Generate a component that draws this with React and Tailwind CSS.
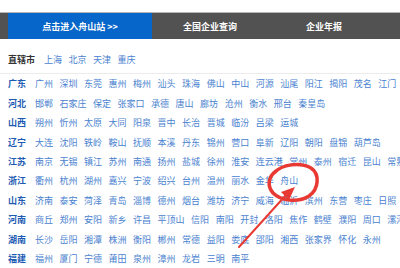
import React from "react";

const rows = [
  ["广东", ["广州","深圳","东莞","惠州","梅州","汕头","珠海","佛山","中山","河源","汕尾","阳江","揭阳","茂名","江门"]],
  ["河北", ["邯郸","石家庄","保定","张家口","承德","唐山","廊坊","沧州","衡水","邢台","秦皇岛"]],
  ["山西", ["朔州","忻州","太原","大同","阳泉","晋中","长治","晋城","临汾","吕梁","运城"]],
  ["辽宁", ["大连","沈阳","铁岭","鞍山","抚顺","本溪","丹东","锦州","营口","阜新","辽阳","朝阳","盘锦","葫芦岛"]],
  ["江苏", ["南京","无锡","镇江","苏州","南通","扬州","盐城","徐州","淮安","连云港","常州","泰州","宿迁","昆山","常熟"]],
  ["浙江", ["衢州","杭州","湖州","嘉兴","宁波","绍兴","台州","温州","丽水","金华","舟山"]],
  ["山东", ["济南","泰安","菏泽","青岛","淄博","德州","烟台","潍坊","济宁","威海","临沂","滨州","东营","枣庄","日照"]],
  ["河南", ["商丘","郑州","安阳","新乡","许昌","平顶山","信阳","南阳","开封","洛阳","焦作","鹤壁","濮阳","周口","漯河"]],
  ["湖南", ["长沙","岳阳","湘潭","株洲","衡阳","郴州","常德","益阳","娄底","邵阳","湘西","张家界","怀化","永州"]],
  ["福建", ["福州","厦门","宁德","莆田","泉州","漳州","龙岩","三明","南平"]],
];

export default function App() {
  return (
    <div
      className="relative w-[400px] h-[268px] overflow-hidden bg-white text-[9px] leading-none"
      style={{ fontFamily: '"Noto Sans CJK SC", "Noto Sans", sans-serif' }}
    >
      <div className="mt-[12px] h-[27px] flex items-stretch bg-[#525252] border-t border-[#b5b5b5] pl-[8px] font-bold text-white">
        <div className="w-[144px] bg-[#0766c9] flex items-center justify-center whitespace-nowrap">
          点击进入舟山站 &gt;&gt;
        </div>
        <div className="w-[116px] flex items-center justify-center">全国企业查询</div>
        <div className="w-[112px] flex items-center justify-center">企业年报</div>
      </div>

      <div className="pt-[10px] pb-[4px] border-b border-[#ececec] mx-0">
        <div className="h-[20px] flex items-center pl-[8px] whitespace-nowrap">
          <span className="font-bold text-[#333333] mr-[9px]">直辖市</span>
          <div className="flex gap-[6.5px] text-[#4a82d0]">
            <span>上海</span><span>北京</span><span>天津</span><span>重庆</span>
          </div>
        </div>
      </div>

      <div className="flex flex-col">
        {rows.map(([p, cities]) => (
          <div key={p} className="h-[19.45px] flex items-center pl-[8px] whitespace-nowrap">
            <span className="font-bold text-[#1e5cb3] mr-[9px]">{p}</span>
            <div className="flex gap-[6.5px] text-[#4a82d0]">
              {cities.map((c) => (
                <span key={c}>{c}</span>
              ))}
            </div>
          </div>
        ))}
      </div>

      <svg className="absolute left-0 top-0 pointer-events-none" width="400" height="268" viewBox="0 0 400 268">
        <path
          d="M274 173 C 282 164, 300 162, 311 168 C 320 174, 319 189, 309 196 C 298 203, 281 201, 273 193 C 267 186, 268 177, 276 171"
          fill="none"
          stroke="#e83a33"
          strokeWidth="3.5"
          strokeLinecap="round"
        />
        <line x1="239" y1="247" x2="286" y2="195" stroke="#e83a33" strokeWidth="2" strokeLinecap="round" />
        <polygon points="295,187 281,192 289,200" fill="#e83a33" />
      </svg>
    </div>
  );
}
